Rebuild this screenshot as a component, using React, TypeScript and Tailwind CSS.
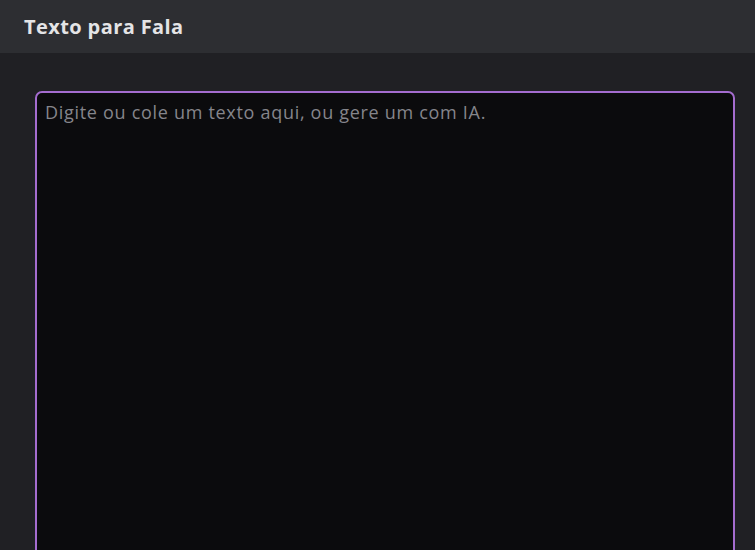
export default function App() {
  return (
    <div className="h-[550px] w-full overflow-hidden bg-[#202024] font-['Open_Sans',sans-serif]">
      <header className="flex h-[53px] items-center bg-[#2d2e32] px-6">
        <h1 className="text-[20px] font-bold tracking-[0.4px] text-[#e4e4e6]">Texto para Fala</h1>
      </header>
      <div className="pt-[38px] pl-[35px] pr-[20px]">
        <textarea
          className="block h-[520px] w-full resize-none rounded-[7px] border-2 border-[#a46ccf] bg-[#0b0b0d] px-[8px] py-[6px] text-[18px] leading-[26px] tracking-[0.7px] text-[#d4d4d8] outline-none placeholder:text-[#85858b]"
          placeholder="Digite ou cole um texto aqui, ou gere um com IA."
        />
      </div>
    </div>
  );
}
